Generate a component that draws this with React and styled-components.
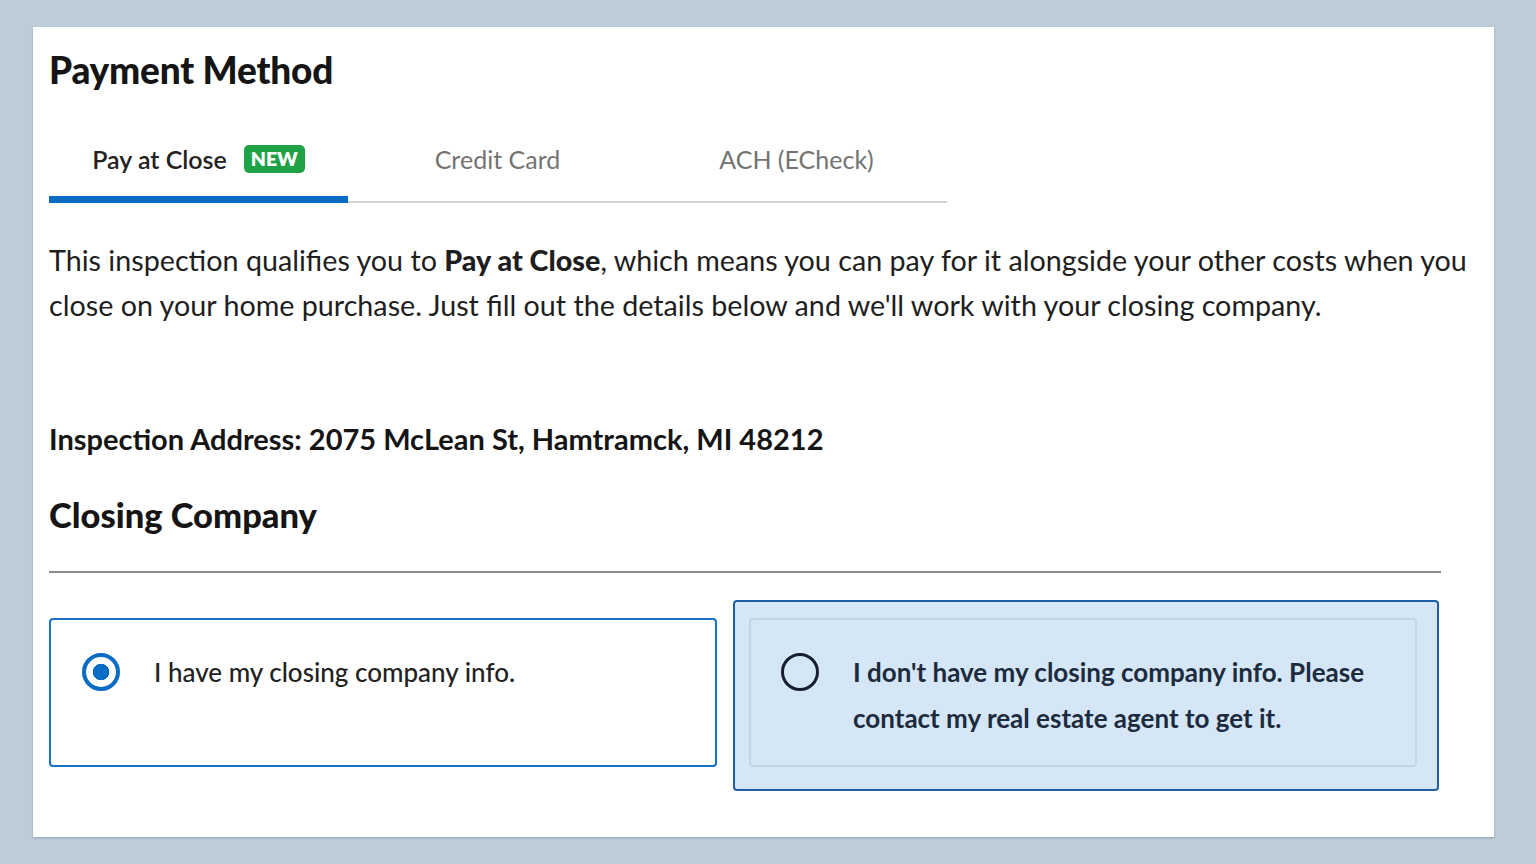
import styled, { createGlobalStyle } from "styled-components";
import { useState } from "react";

const GlobalStyle = createGlobalStyle`
  html, body {
    margin: 0;
    padding: 0;
    background: #bdccd9;
    font-family: "Lato", "Open Sans", sans-serif;
    color: #1b1b1b;
  }
`;

const tabs = [
  { id: "close", label: "Pay at Close", isNew: true },
  { id: "card", label: "Credit Card" },
  { id: "ach", label: "ACH (ECheck)" },
];

const options = [
  { id: "have", label: "I have my closing company info." },
  {
    id: "none",
    label:
      "I don't have my closing company info. Please contact my real estate agent to get it.",
  },
];

export default function App() {
  const [tab, setTab] = useState("close");
  const [choice, setChoice] = useState("have");

  return (
    <Page>
      <GlobalStyle />
      <Card>
        <Title>Payment Method</Title>
        <TabBar>
          {tabs.map((t) => (
            <Tab key={t.id} $active={tab === t.id} onClick={() => setTab(t.id)}>
              {t.label}
              {t.isNew && <NewBadge>NEW</NewBadge>}
            </Tab>
          ))}
        </TabBar>

        <Intro>
          This inspection qualifies you to <strong>Pay at Close</strong>, which
          means you can pay for it alongside your other costs when you close on
          your home purchase. Just fill out the details below and we'll work
          with your closing company.
        </Intro>

        <Address>Inspection Address: 2075 McLean St, Hamtramck, MI 48212</Address>
        <SectionTitle>Closing Company</SectionTitle>
        <Divider />

        <Options>
          {options.map((o) => (
            <OptionFrame key={o.id} $focused={o.id === "none"}>
              <Option
                $focused={o.id === "none"}
                onClick={() => setChoice(o.id)}
              >
                <Radio $checked={choice === o.id} />
                <OptionText $focused={o.id === "none"}>{o.label}</OptionText>
              </Option>
            </OptionFrame>
          ))}
        </Options>
      </Card>
    </Page>
  );
}

const Page = styled.div`
  padding: 27px 42px 27px 33px;
  min-height: 864px;
  box-sizing: border-box;
`;

const Card = styled.div`
  background: #fff;
  box-shadow: 0 1px 2px rgba(60, 80, 100, 0.35);
  padding: 24px 0 48px 16px;
  height: 810px;
  box-sizing: border-box;
`;

const Title = styled.h1`
  margin: 0;
  font-size: 37px;
  font-weight: 900;
  line-height: 1;
  letter-spacing: -0.2px;
  color: #151515;
`;

const TabBar = styled.div`
  display: flex;
  width: 898px;
  margin-top: 35px;
  border-bottom: 2px solid #d4d4d4;
`;

const Tab = styled.button`
  flex: 0 0 299px;
  height: 80px;
  display: flex;
  align-items: center;
  justify-content: center;
  gap: 17px;
  border: none;
  background: none;
  font-family: inherit;
  font-size: 25px;
  font-weight: ${(p) => (p.$active ? 600 : 400)};
  color: ${(p) => (p.$active ? "#222" : "#737373")};
  box-shadow: ${(p) => (p.$active ? "inset 0 -7px 0 #0b6cc4" : "none")};
  margin-bottom: -2px;
  padding: 0 0 8px;
  cursor: pointer;
`;

const NewBadge = styled.span`
  background: #1fa246;
  color: #fff;
  font-size: 19.5px;
  font-weight: 800;
  border-radius: 5px;
  padding: 2px 7px;
  line-height: 24px;
`;

const Intro = styled.p`
  margin: 35px 0 0;
  width: 1430px;
  font-size: 28.7px;
  line-height: 45px;
  color: #1e1e1e;

  strong {
    font-weight: 900;
  }
`;

const Address = styled.div`
  margin-top: 93px;
  font-size: 29px;
  font-weight: 700;
  color: #151515;
`;

const SectionTitle = styled.h2`
  margin: 38px 0 0;
  font-size: 34.5px;
  font-weight: 900;
  color: #151515;
`;

const Divider = styled.hr`
  margin: 36px 0 0;
  width: 1392px;
  border: none;
  border-top: 2px solid #8c8c8c;
`;

const Options = styled.div`
  display: grid;
  grid-template-columns: 668px 706px;
  gap: 16px;
  margin-top: 27px;
  align-items: start;
`;

const OptionFrame = styled.div`
  padding: ${(p) => (p.$focused ? "16px 20px 22px 14px" : "18px 0 0")};
  border: ${(p) => (p.$focused ? "2px solid #1e5fa8" : "none")};
  border-radius: 4px;
  background: ${(p) => (p.$focused ? "#d5e6f7" : "transparent")};
`;

const Option = styled.div`
  display: flex;
  align-items: flex-start;
  gap: 34px;
  height: 149px;
  box-sizing: border-box;
  padding: 33px 24px 0 ${(p) => (p.$focused ? "30px" : "31px")};
  border: ${(p) => (p.$focused ? "2px solid #c6d5e4" : "2px solid #1672c7")};
  border-radius: 4px;
  background: ${(p) => (p.$focused ? "#d5e6f7" : "#fff")};
  cursor: pointer;
`;

const Radio = styled.span`
  flex: 0 0 auto;
  width: 38px;
  height: 38px;
  box-sizing: border-box;
  border-radius: 50%;
  border: ${(p) => (p.$checked ? "4px solid #0b6cc4" : "3px solid #16202c")};
  background: ${(p) =>
    p.$checked
      ? "radial-gradient(circle, #0b6cc4 0 8px, transparent 8.5px)"
      : "transparent"};
`;

const OptionText = styled.div`
  font-size: 26px;
  line-height: 46px;
  margin-top: -4px;
  font-weight: ${(p) => (p.$focused ? 700 : 500)};
  color: ${(p) => (p.$focused ? "#1c2b3d" : "#222")};
`;
